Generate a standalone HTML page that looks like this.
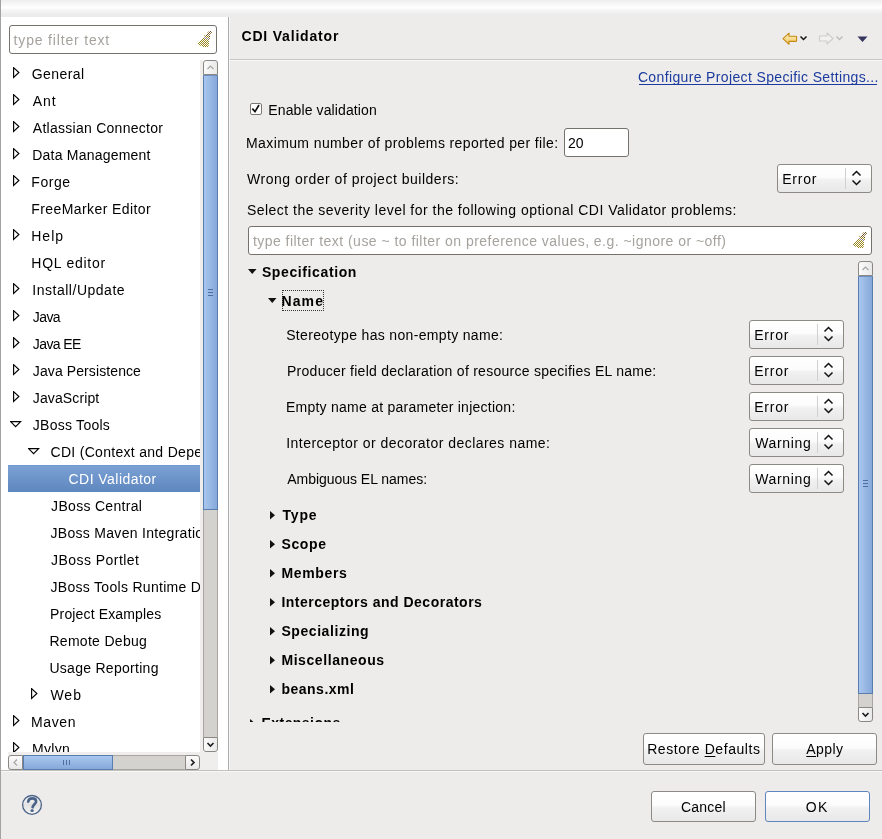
<!DOCTYPE html>
<html><head><meta charset="utf-8"><style>
html,body{margin:0;padding:0}
body{width:882px;height:839px;position:relative;overflow:hidden;background:#edeceb;font-family:"Liberation Sans", sans-serif;font-size:14px;color:#000}
.t{position:absolute;white-space:nowrap;line-height:16px;letter-spacing:0.3px}
u{text-decoration:underline;text-underline-offset:2px}
</style></head><body>
<div id="root" style="position:absolute;left:0;top:0;width:882px;height:839px;will-change:transform">
<div style="position:absolute;left:0px;top:0px;width:882px;height:17px;background:linear-gradient(#eeeeee 0px,#f7f7f7 4px,#ffffff 7.5px,#f6f6f6 10px,#ededed 14px,#ebebea 17px)"></div>
<div style="position:absolute;left:0px;top:0px;width:1px;height:839px;background:#a2a2a2"></div>
<div style="position:absolute;left:1px;top:17px;width:227px;height:753px;background:#ffffff"></div>
<div style="position:absolute;left:228px;top:17px;width:1px;height:753px;background:#acacac"></div>
<div style="position:absolute;left:229px;top:17px;width:1px;height:753px;background:#f7f7f7"></div>
<div style="position:absolute;left:1px;top:770px;width:881px;height:1px;background:#c2c0bd"></div>
<div style="position:absolute;left:1px;top:771px;width:881px;height:1px;background:#f8f8f7"></div>
<div style="position:absolute;left:9px;top:25px;width:208px;height:29px;box-sizing:border-box;border:1px solid #75716d;border-radius:3px;background:#fff"></div>
<div class="t" style="left:13.6px;top:32.15px;letter-spacing:0.827px;color:#a6a29e">type filter text</div>
<svg style="position:absolute;left:194px;top:28px" width="20" height="20" viewBox="0 0 20 20" shape-rendering="crispEdges"><rect x="14" y="3" width="1" height="1" fill="#c8b49a"/><rect x="16" y="3" width="1" height="1" fill="#6f4d1f"/><rect x="13" y="4" width="1" height="1" fill="#c8b49a"/><rect x="15" y="4" width="1" height="1" fill="#6f4d1f"/><rect x="17" y="4" width="1" height="1" fill="#9a7a52"/><rect x="14" y="5" width="1" height="1" fill="#6f4d1f"/><rect x="16" y="5" width="1" height="1" fill="#9a7a52"/><rect x="13" y="6" width="1" height="1" fill="#6f4d1f"/><rect x="15" y="6" width="1" height="1" fill="#9a7a52"/><rect x="10" y="7" width="1" height="1" fill="#bdb060"/><rect x="12" y="7" width="1" height="1" fill="#6f4d1f"/><rect x="14" y="7" width="1" height="1" fill="#9a7a52"/><rect x="11" y="8" width="1" height="1" fill="#9d8b22"/><rect x="13" y="8" width="1" height="1" fill="#9d8b22"/><rect x="15" y="8" width="1" height="1" fill="#6f4d1f"/><rect x="10" y="9" width="1" height="1" fill="#8c7ea6"/><rect x="12" y="9" width="1" height="1" fill="#9d8b22"/><rect x="14" y="9" width="1" height="1" fill="#9d8b22"/><rect x="9" y="10" width="1" height="1" fill="#9d8b22"/><rect x="11" y="10" width="1" height="1" fill="#8c7ea6"/><rect x="13" y="10" width="1" height="1" fill="#8c7ea6"/><rect x="15" y="10" width="1" height="1" fill="#9d8b22"/><rect x="8" y="11" width="1" height="1" fill="#9d8b22"/><rect x="10" y="11" width="1" height="1" fill="#9d8b22"/><rect x="12" y="11" width="1" height="1" fill="#9d8b22"/><rect x="14" y="11" width="1" height="1" fill="#8c7ea6"/><rect x="7" y="12" width="1" height="1" fill="#9d8b22"/><rect x="9" y="12" width="1" height="1" fill="#9d8b22"/><rect x="11" y="12" width="1" height="1" fill="#9d8b22"/><rect x="13" y="12" width="1" height="1" fill="#9d8b22"/><rect x="6" y="13" width="1" height="1" fill="#9d8b22"/><rect x="8" y="13" width="1" height="1" fill="#9d8b22"/><rect x="10" y="13" width="1" height="1" fill="#9d8b22"/><rect x="12" y="13" width="1" height="1" fill="#9d8b22"/><rect x="14" y="13" width="1" height="1" fill="#9d8b22"/><rect x="5" y="14" width="1" height="1" fill="#9d8b22"/><rect x="7" y="14" width="1" height="1" fill="#9d8b22"/><rect x="9" y="14" width="1" height="1" fill="#9d8b22"/><rect x="11" y="14" width="1" height="1" fill="#9d8b22"/><rect x="13" y="14" width="1" height="1" fill="#9d8b22"/><rect x="4" y="15" width="1" height="1" fill="#9d8b22"/><rect x="6" y="15" width="1" height="1" fill="#9d8b22"/><rect x="8" y="15" width="1" height="1" fill="#9d8b22"/><rect x="10" y="15" width="1" height="1" fill="#9d8b22"/><rect x="12" y="15" width="1" height="1" fill="#9d8b22"/><rect x="14" y="15" width="1" height="1" fill="#9d8b22"/><rect x="5" y="16" width="1" height="1" fill="#9d8b22"/><rect x="7" y="16" width="1" height="1" fill="#9d8b22"/><rect x="9" y="16" width="1" height="1" fill="#9d8b22"/><rect x="11" y="16" width="1" height="1" fill="#9d8b22"/><rect x="13" y="16" width="1" height="1" fill="#9d8b22"/><rect x="6" y="17" width="1" height="1" fill="#bdb060"/><rect x="8" y="17" width="1" height="1" fill="#9d8b22"/><rect x="10" y="17" width="1" height="1" fill="#9d8b22"/><rect x="12" y="17" width="1" height="1" fill="#9d8b22"/><rect x="14" y="17" width="1" height="1" fill="#bdb060"/><rect x="9" y="18" width="1" height="1" fill="#9d8b22"/><rect x="11" y="18" width="1" height="1" fill="#9d8b22"/><rect x="13" y="18" width="1" height="1" fill="#9d8b22"/></svg>
<div style="position:absolute;left:8px;top:60px;width:192px;height:692px;overflow:hidden">
<div class="t" style="left:23.8px;top:5.85px;color:#000000;letter-spacing:0.433px">General</div>
<svg style="position:absolute;left:5px;top:7px" width="8" height="12" viewBox="0 0 8 12"><path d="M0.6,0.6 L5.9,5.5 L0.6,10.4 Z" fill="none" stroke="#000" stroke-width="1.15" stroke-linejoin="miter"/></svg>
<div class="t" style="left:24.799999999999997px;top:32.85px;color:#000000;letter-spacing:0.9px">Ant</div>
<svg style="position:absolute;left:5px;top:34px" width="8" height="12" viewBox="0 0 8 12"><path d="M0.6,0.6 L5.9,5.5 L0.6,10.4 Z" fill="none" stroke="#000" stroke-width="1.15" stroke-linejoin="miter"/></svg>
<div class="t" style="left:24.799999999999997px;top:59.85px;color:#000000;letter-spacing:0.267px">Atlassian Connector</div>
<svg style="position:absolute;left:5px;top:61px" width="8" height="12" viewBox="0 0 8 12"><path d="M0.6,0.6 L5.9,5.5 L0.6,10.4 Z" fill="none" stroke="#000" stroke-width="1.15" stroke-linejoin="miter"/></svg>
<div class="t" style="left:24.299999999999997px;top:86.85px;color:#000000;letter-spacing:0.214px">Data Management</div>
<svg style="position:absolute;left:5px;top:88px" width="8" height="12" viewBox="0 0 8 12"><path d="M0.6,0.6 L5.9,5.5 L0.6,10.4 Z" fill="none" stroke="#000" stroke-width="1.15" stroke-linejoin="miter"/></svg>
<div class="t" style="left:23.3px;top:113.85px;color:#000000;letter-spacing:0.55px">Forge</div>
<svg style="position:absolute;left:5px;top:115px" width="8" height="12" viewBox="0 0 8 12"><path d="M0.6,0.6 L5.9,5.5 L0.6,10.4 Z" fill="none" stroke="#000" stroke-width="1.15" stroke-linejoin="miter"/></svg>
<div class="t" style="left:23.3px;top:140.85px;color:#000000;letter-spacing:0.406px">FreeMarker Editor</div>
<div class="t" style="left:23.3px;top:167.85px;color:#000000;letter-spacing:0.967px">Help</div>
<svg style="position:absolute;left:5px;top:169px" width="8" height="12" viewBox="0 0 8 12"><path d="M0.6,0.6 L5.9,5.5 L0.6,10.4 Z" fill="none" stroke="#000" stroke-width="1.15" stroke-linejoin="miter"/></svg>
<div class="t" style="left:23.3px;top:194.85px;color:#000000;letter-spacing:0.733px">HQL editor</div>
<div class="t" style="left:24.299999999999997px;top:221.85px;color:#000000;letter-spacing:0.515px">Install/Update</div>
<svg style="position:absolute;left:5px;top:223px" width="8" height="12" viewBox="0 0 8 12"><path d="M0.6,0.6 L5.9,5.5 L0.6,10.4 Z" fill="none" stroke="#000" stroke-width="1.15" stroke-linejoin="miter"/></svg>
<div class="t" style="left:24.799999999999997px;top:248.85px;color:#000000;letter-spacing:-0.6px">Java</div>
<svg style="position:absolute;left:5px;top:250px" width="8" height="12" viewBox="0 0 8 12"><path d="M0.6,0.6 L5.9,5.5 L0.6,10.4 Z" fill="none" stroke="#000" stroke-width="1.15" stroke-linejoin="miter"/></svg>
<div class="t" style="left:24.799999999999997px;top:275.85px;color:#000000;letter-spacing:-0.6px">Java EE</div>
<svg style="position:absolute;left:5px;top:277px" width="8" height="12" viewBox="0 0 8 12"><path d="M0.6,0.6 L5.9,5.5 L0.6,10.4 Z" fill="none" stroke="#000" stroke-width="1.15" stroke-linejoin="miter"/></svg>
<div class="t" style="left:24.799999999999997px;top:302.85px;color:#000000;letter-spacing:0.1px">Java Persistence</div>
<svg style="position:absolute;left:5px;top:304px" width="8" height="12" viewBox="0 0 8 12"><path d="M0.6,0.6 L5.9,5.5 L0.6,10.4 Z" fill="none" stroke="#000" stroke-width="1.15" stroke-linejoin="miter"/></svg>
<div class="t" style="left:24.799999999999997px;top:329.85px;color:#000000;letter-spacing:0.122px">JavaScript</div>
<svg style="position:absolute;left:5px;top:331px" width="8" height="12" viewBox="0 0 8 12"><path d="M0.6,0.6 L5.9,5.5 L0.6,10.4 Z" fill="none" stroke="#000" stroke-width="1.15" stroke-linejoin="miter"/></svg>
<div class="t" style="left:24.799999999999997px;top:356.85px;color:#000000;letter-spacing:0.26px">JBoss Tools</div>
<svg style="position:absolute;left:2px;top:361px" width="12" height="8" viewBox="0 0 12 8"><path d="M0.6,0.6 L10.6,0.6 L5.6,5.6 Z" fill="none" stroke="#000" stroke-width="1.15" stroke-linejoin="miter"/></svg>
<div class="t" style="left:42.5px;top:383.85px;color:#000000;letter-spacing:0.3px">CDI (Context and Dependency Injection)</div>
<svg style="position:absolute;left:20px;top:388px" width="12" height="8" viewBox="0 0 12 8"><path d="M0.6,0.6 L10.6,0.6 L5.6,5.6 Z" fill="none" stroke="#000" stroke-width="1.15" stroke-linejoin="miter"/></svg>
<div style="position:absolute;left:0;top:405px;width:192px;height:27px;background:linear-gradient(#7ca2d5,#5e87bf)"></div>
<div style="position:absolute;left:0;top:405px;width:192px;height:1px;background:#7299cf"></div>
<div class="t" style="left:60.5px;top:410.85px;color:#ffffff;letter-spacing:0.458px">CDI Validator</div>
<div class="t" style="left:43.1px;top:437.85px;color:#000000;letter-spacing:0.308px">JBoss Central</div>
<div class="t" style="left:42.5px;top:464.85px;color:#000000;letter-spacing:0.3px">JBoss Maven Integration</div>
<div class="t" style="left:43.1px;top:491.85px;color:#000000;letter-spacing:0.45px">JBoss Portlet</div>
<div class="t" style="left:42.5px;top:518.85px;color:#000000;letter-spacing:0.3px">JBoss Tools Runtime Detection</div>
<div class="t" style="left:42.1px;top:545.85px;color:#000000;letter-spacing:0.147px">Project Examples</div>
<div class="t" style="left:41.4px;top:572.85px;color:#000000;letter-spacing:0.3px">Remote Debug</div>
<div class="t" style="left:41.4px;top:599.85px;color:#000000;letter-spacing:0.286px">Usage Reporting</div>
<div class="t" style="left:42.4px;top:626.85px;color:#000000;letter-spacing:1.0px">Web</div>
<svg style="position:absolute;left:23px;top:628px" width="8" height="12" viewBox="0 0 8 12"><path d="M0.6,0.6 L5.9,5.5 L0.6,10.4 Z" fill="none" stroke="#000" stroke-width="1.15" stroke-linejoin="miter"/></svg>
<div class="t" style="left:23.1px;top:653.85px;color:#000000;letter-spacing:0.575px">Maven</div>
<svg style="position:absolute;left:5px;top:655px" width="8" height="12" viewBox="0 0 8 12"><path d="M0.6,0.6 L5.9,5.5 L0.6,10.4 Z" fill="none" stroke="#000" stroke-width="1.15" stroke-linejoin="miter"/></svg>
<div class="t" style="left:24px;top:680.85px;color:#000000;letter-spacing:0.3px">Mylyn</div>
<svg style="position:absolute;left:5px;top:682px" width="8" height="12" viewBox="0 0 8 12"><path d="M0.6,0.6 L5.9,5.5 L0.6,10.4 Z" fill="none" stroke="#000" stroke-width="1.15" stroke-linejoin="miter"/></svg>
</div>
<div style="position:absolute;left:200px;top:60px;width:3px;height:692px;background:#efeeed"></div>
<div style="position:absolute;left:203px;top:60px;width:15px;height:15px;box-sizing:border-box;border:1px solid #8b8884;border-radius:3px 3px 0 0;background:linear-gradient(90deg,#fbfbfb,#e9e9e9)"></div>
<svg style="position:absolute;left:203px;top:60px" width="15" height="15" viewBox="0 0 15 15"><path d="M4.5,9 L7.5,6 L10.5,9" fill="none" stroke="#a9a6a2" stroke-width="1.2"/></svg>
<div style="position:absolute;left:203px;top:75px;width:15px;height:662px;box-sizing:border-box;border-left:1px solid #a9a6a2;border-right:1px solid #a9a6a2;background:#d4d2cf"></div>
<div style="position:absolute;left:203px;top:75px;width:15px;height:435px;box-sizing:border-box;border:1px solid #5a7db0;border-top-color:#7090c0;background:linear-gradient(90deg,#a8c6ee,#98b8e4 50%,#85a8da)"></div>
<div style="position:absolute;left:208px;top:289px;width:5px;height:1px;background:#4d6fa3"></div>
<div style="position:absolute;left:208px;top:292px;width:5px;height:1px;background:#4d6fa3"></div>
<div style="position:absolute;left:208px;top:295px;width:5px;height:1px;background:#4d6fa3"></div>
<div style="position:absolute;left:203px;top:737px;width:15px;height:15px;box-sizing:border-box;border:1px solid #8b8884;border-radius:0 0 3px 3px;background:linear-gradient(90deg,#fbfbfb,#e9e9e9)"></div>
<svg style="position:absolute;left:203px;top:737px" width="15" height="15" viewBox="0 0 15 15"><path d="M4.5,6 L7.5,9 L10.5,6" fill="none" stroke="#1a1a1a" stroke-width="1.6"/></svg>
<div style="position:absolute;left:8px;top:752px;width:210px;height:18px;background:#efeeed"></div>
<div style="position:absolute;left:8px;top:755px;width:15px;height:15px;box-sizing:border-box;border:1px solid #8b8884;border-radius:3px 0 0 3px;background:linear-gradient(#fbfbfb,#e9e9e9)"></div>
<svg style="position:absolute;left:8px;top:755px" width="15" height="15" viewBox="0 0 15 15"><path d="M9,4.5 L6,7.5 L9,10.5" fill="none" stroke="#a9a6a2" stroke-width="1.2"/></svg>
<div style="position:absolute;left:23px;top:755px;width:162px;height:15px;box-sizing:border-box;border-top:1px solid #a9a6a2;border-bottom:1px solid #a9a6a2;background:#d4d2cf"></div>
<div style="position:absolute;left:23px;top:755px;width:90px;height:15px;box-sizing:border-box;border:1px solid #5a7db0;background:linear-gradient(#a8c6ee,#98b8e4 50%,#85a8da)"></div>
<div style="position:absolute;left:63px;top:760px;width:1px;height:5px;background:#4d6fa3"></div>
<div style="position:absolute;left:66px;top:760px;width:1px;height:5px;background:#4d6fa3"></div>
<div style="position:absolute;left:69px;top:760px;width:1px;height:5px;background:#4d6fa3"></div>
<div style="position:absolute;left:185px;top:755px;width:15px;height:15px;box-sizing:border-box;border:1px solid #8b8884;border-radius:0 3px 3px 0;background:linear-gradient(#fbfbfb,#e9e9e9)"></div>
<svg style="position:absolute;left:185px;top:755px" width="15" height="15" viewBox="0 0 15 15"><path d="M6,4.5 L9,7.5 L6,10.5" fill="none" stroke="#1a1a1a" stroke-width="1.6"/></svg>
<div class="t" style="left:241.5px;top:28.25px;letter-spacing:0.808px;font-weight:bold">CDI Validator</div>
<div style="position:absolute;left:230px;top:59px;width:652px;height:1px;background:#c9c7c4"></div>
<div style="position:absolute;left:230px;top:60px;width:652px;height:1px;background:#f7f7f6"></div>
<svg style="position:absolute;left:782px;top:32px" width="16" height="14" viewBox="0 0 16 14">
<defs><linearGradient id="ag" x1="0" y1="0" x2="0" y2="1"><stop offset="0" stop-color="#fff4c8"/><stop offset="1" stop-color="#f0c458"/></linearGradient></defs>
<path d="M1,6.7 L7,1.2 L7,4.2 L14,4.2 Q14.6,4.2 14.6,4.8 L14.6,8.8 Q14.6,9.4 14,9.4 L7,9.4 L7,12.3 Z" fill="url(#ag)" stroke="#c48a12" stroke-width="1.1" stroke-linejoin="round"/></svg>
<svg style="position:absolute;left:799px;top:35px" width="10" height="7" viewBox="0 0 10 7"><path d="M1.5,1.5 L4.5,4.5 L7.5,1.5" fill="none" stroke="#111" stroke-width="1.45"/></svg>
<svg style="position:absolute;left:818px;top:32px" width="16" height="14" viewBox="0 0 16 14">
<path d="M15,6.5 L9,1 L9,4 L1.5,4 L1.5,9 L9,9 L9,12 Z" fill="#f1f1f0" stroke="#cfcecc" stroke-width="1.1" stroke-linejoin="round"/></svg>
<svg style="position:absolute;left:835px;top:35px" width="10" height="7" viewBox="0 0 10 7"><path d="M1.5,1.5 L4.5,4.5 L7.5,1.5" fill="none" stroke="#bdbcba" stroke-width="1.4"/></svg>
<svg style="position:absolute;left:857px;top:36px" width="12" height="7" viewBox="0 0 12 7"><path d="M0.5,0.5 L10.5,0.5 L5.5,6 Z" fill="#35355e"/></svg>
<div class="t" style="left:637.9px;top:68.95px;letter-spacing:0.362px;color:#1b3b9e">Configure Project Specific Settings...</div>
<div style="position:absolute;left:639px;top:84px;width:238px;height:1px;background:#1b3b9e"></div>
<div style="position:absolute;left:250px;top:103px;width:12px;height:12px;box-sizing:border-box;border:1px solid #7a7773;border-radius:2px;background:#fff"></div>
<svg style="position:absolute;left:250px;top:103px" width="12" height="12" viewBox="0 0 12 12"><path d="M2.3,5.6 L5,8.6 L9,2" fill="none" stroke="#111" stroke-width="1.7"/></svg>
<div class="t" style="left:268.3px;top:102.35px;letter-spacing:0.113px;">Enable validation</div>
<div class="t" style="left:246px;top:134.85px;letter-spacing:0.393px;">Maximum number of problems reported per file:</div>
<div style="position:absolute;left:564px;top:128px;width:65px;height:29px;box-sizing:border-box;border:1px solid #75716d;border-radius:3px;background:#fff"></div>
<div class="t" style="left:567.9px;top:134.95px;letter-spacing:0.1px;">20</div>
<div class="t" style="left:247px;top:171.15px;letter-spacing:0.513px;">Wrong order of project builders:</div>
<div style="position:absolute;left:777px;top:164px;width:95px;height:29px;box-sizing:border-box;border:1px solid #8d8a86;border-radius:3px;background:linear-gradient(#ffffff,#fcfcfc 45%,#f1f1f1 55%,#e8e8e8)"></div>
<div style="position:absolute;left:845px;top:168px;width:1px;height:21px;background:#d2d0cd"></div>
<svg style="position:absolute;left:851px;top:170px" width="12" height="16" viewBox="0 0 12 16"><path d="M1.5,5.5 L5.5,1.5 L9.5,5.5 M1.5,10.5 L5.5,14.5 L9.5,10.5" fill="none" stroke="#111" stroke-width="1.5"/></svg>
<div class="t" style="left:782.3px;top:171.15px;letter-spacing:0.725px;">Error</div>
<div class="t" style="left:246.9px;top:202.15px;letter-spacing:0.481px;">Select the severity level for the following optional CDI Validator problems:</div>
<div style="position:absolute;left:248px;top:226px;width:624px;height:29px;box-sizing:border-box;border:1px solid #75716d;border-radius:3px;background:#fff"></div>
<div class="t" style="left:252.9px;top:233.15px;letter-spacing:0.468px;color:#a6a29e">type filter text (use ~ to filter on preference values, e.g. ~ignore or ~off)</div>
<svg style="position:absolute;left:849px;top:229px" width="20" height="20" viewBox="0 0 20 20" shape-rendering="crispEdges"><rect x="14" y="3" width="1" height="1" fill="#c8b49a"/><rect x="16" y="3" width="1" height="1" fill="#6f4d1f"/><rect x="13" y="4" width="1" height="1" fill="#c8b49a"/><rect x="15" y="4" width="1" height="1" fill="#6f4d1f"/><rect x="17" y="4" width="1" height="1" fill="#9a7a52"/><rect x="14" y="5" width="1" height="1" fill="#6f4d1f"/><rect x="16" y="5" width="1" height="1" fill="#9a7a52"/><rect x="13" y="6" width="1" height="1" fill="#6f4d1f"/><rect x="15" y="6" width="1" height="1" fill="#9a7a52"/><rect x="10" y="7" width="1" height="1" fill="#bdb060"/><rect x="12" y="7" width="1" height="1" fill="#6f4d1f"/><rect x="14" y="7" width="1" height="1" fill="#9a7a52"/><rect x="11" y="8" width="1" height="1" fill="#9d8b22"/><rect x="13" y="8" width="1" height="1" fill="#9d8b22"/><rect x="15" y="8" width="1" height="1" fill="#6f4d1f"/><rect x="10" y="9" width="1" height="1" fill="#8c7ea6"/><rect x="12" y="9" width="1" height="1" fill="#9d8b22"/><rect x="14" y="9" width="1" height="1" fill="#9d8b22"/><rect x="9" y="10" width="1" height="1" fill="#9d8b22"/><rect x="11" y="10" width="1" height="1" fill="#8c7ea6"/><rect x="13" y="10" width="1" height="1" fill="#8c7ea6"/><rect x="15" y="10" width="1" height="1" fill="#9d8b22"/><rect x="8" y="11" width="1" height="1" fill="#9d8b22"/><rect x="10" y="11" width="1" height="1" fill="#9d8b22"/><rect x="12" y="11" width="1" height="1" fill="#9d8b22"/><rect x="14" y="11" width="1" height="1" fill="#8c7ea6"/><rect x="7" y="12" width="1" height="1" fill="#9d8b22"/><rect x="9" y="12" width="1" height="1" fill="#9d8b22"/><rect x="11" y="12" width="1" height="1" fill="#9d8b22"/><rect x="13" y="12" width="1" height="1" fill="#9d8b22"/><rect x="6" y="13" width="1" height="1" fill="#9d8b22"/><rect x="8" y="13" width="1" height="1" fill="#9d8b22"/><rect x="10" y="13" width="1" height="1" fill="#9d8b22"/><rect x="12" y="13" width="1" height="1" fill="#9d8b22"/><rect x="14" y="13" width="1" height="1" fill="#9d8b22"/><rect x="5" y="14" width="1" height="1" fill="#9d8b22"/><rect x="7" y="14" width="1" height="1" fill="#9d8b22"/><rect x="9" y="14" width="1" height="1" fill="#9d8b22"/><rect x="11" y="14" width="1" height="1" fill="#9d8b22"/><rect x="13" y="14" width="1" height="1" fill="#9d8b22"/><rect x="4" y="15" width="1" height="1" fill="#9d8b22"/><rect x="6" y="15" width="1" height="1" fill="#9d8b22"/><rect x="8" y="15" width="1" height="1" fill="#9d8b22"/><rect x="10" y="15" width="1" height="1" fill="#9d8b22"/><rect x="12" y="15" width="1" height="1" fill="#9d8b22"/><rect x="14" y="15" width="1" height="1" fill="#9d8b22"/><rect x="5" y="16" width="1" height="1" fill="#9d8b22"/><rect x="7" y="16" width="1" height="1" fill="#9d8b22"/><rect x="9" y="16" width="1" height="1" fill="#9d8b22"/><rect x="11" y="16" width="1" height="1" fill="#9d8b22"/><rect x="13" y="16" width="1" height="1" fill="#9d8b22"/><rect x="6" y="17" width="1" height="1" fill="#bdb060"/><rect x="8" y="17" width="1" height="1" fill="#9d8b22"/><rect x="10" y="17" width="1" height="1" fill="#9d8b22"/><rect x="12" y="17" width="1" height="1" fill="#9d8b22"/><rect x="14" y="17" width="1" height="1" fill="#bdb060"/><rect x="9" y="18" width="1" height="1" fill="#9d8b22"/><rect x="11" y="18" width="1" height="1" fill="#9d8b22"/><rect x="13" y="18" width="1" height="1" fill="#9d8b22"/></svg>
<div style="position:absolute;left:240px;top:262px;width:617px;height:460px;overflow:hidden">
<svg style="position:absolute;left:8px;top:7px" width="9" height="6" viewBox="0 0 9 6"><path d="M0,0 L8.5,0 L4.25,5 Z" fill="#111"/></svg>
<div class="t" style="left:21.899999999999977px;top:2.35px;letter-spacing:0.617px;font-weight:bold">Specification</div>
<svg style="position:absolute;left:28px;top:36px" width="9" height="6" viewBox="0 0 9 6"><path d="M0,0 L8.5,0 L4.25,5 Z" fill="#111"/></svg>
<div style="position:absolute;left:42px;top:28px;width:42px;height:21px;box-sizing:border-box;border:1px dotted #333"></div>
<div class="t" style="left:41.39999999999998px;top:31.15px;letter-spacing:1.133px;font-weight:bold">Name</div>
<div class="t" style="left:46.19999999999999px;top:65.25px;letter-spacing:0.338px;">Stereotype has non-empty name:</div>
<div class="t" style="left:47px;top:101.25px;letter-spacing:0.266px;">Producer field declaration of resource specifies EL name:</div>
<div class="t" style="left:45.89999999999998px;top:137.25px;letter-spacing:0.255px;">Empty name at parameter injection:</div>
<div class="t" style="left:46.19999999999999px;top:173.25px;letter-spacing:0.471px;">Interceptor or decorator declares name:</div>
<div class="t" style="left:47.19999999999999px;top:209.25px;letter-spacing:-0.028px;">Ambiguous EL names:</div>
</div>
<div style="position:absolute;left:749px;top:320px;width:95px;height:29px;box-sizing:border-box;border:1px solid #8d8a86;border-radius:3px;background:linear-gradient(#ffffff,#fcfcfc 45%,#f1f1f1 55%,#e8e8e8)"></div>
<div style="position:absolute;left:817px;top:324px;width:1px;height:21px;background:#d2d0cd"></div>
<svg style="position:absolute;left:823px;top:326px" width="12" height="16" viewBox="0 0 12 16"><path d="M1.5,5.5 L5.5,1.5 L9.5,5.5 M1.5,10.5 L5.5,14.5 L9.5,10.5" fill="none" stroke="#111" stroke-width="1.5"/></svg>
<div class="t" style="left:754.3px;top:327.15px;letter-spacing:0.725px;">Error</div>
<div style="position:absolute;left:749px;top:356px;width:95px;height:29px;box-sizing:border-box;border:1px solid #8d8a86;border-radius:3px;background:linear-gradient(#ffffff,#fcfcfc 45%,#f1f1f1 55%,#e8e8e8)"></div>
<div style="position:absolute;left:817px;top:360px;width:1px;height:21px;background:#d2d0cd"></div>
<svg style="position:absolute;left:823px;top:362px" width="12" height="16" viewBox="0 0 12 16"><path d="M1.5,5.5 L5.5,1.5 L9.5,5.5 M1.5,10.5 L5.5,14.5 L9.5,10.5" fill="none" stroke="#111" stroke-width="1.5"/></svg>
<div class="t" style="left:754.3px;top:363.15px;letter-spacing:0.725px;">Error</div>
<div style="position:absolute;left:749px;top:392px;width:95px;height:29px;box-sizing:border-box;border:1px solid #8d8a86;border-radius:3px;background:linear-gradient(#ffffff,#fcfcfc 45%,#f1f1f1 55%,#e8e8e8)"></div>
<div style="position:absolute;left:817px;top:396px;width:1px;height:21px;background:#d2d0cd"></div>
<svg style="position:absolute;left:823px;top:398px" width="12" height="16" viewBox="0 0 12 16"><path d="M1.5,5.5 L5.5,1.5 L9.5,5.5 M1.5,10.5 L5.5,14.5 L9.5,10.5" fill="none" stroke="#111" stroke-width="1.5"/></svg>
<div class="t" style="left:754.3px;top:399.15px;letter-spacing:0.725px;">Error</div>
<div style="position:absolute;left:749px;top:428px;width:95px;height:29px;box-sizing:border-box;border:1px solid #8d8a86;border-radius:3px;background:linear-gradient(#ffffff,#fcfcfc 45%,#f1f1f1 55%,#e8e8e8)"></div>
<div style="position:absolute;left:817px;top:432px;width:1px;height:21px;background:#d2d0cd"></div>
<svg style="position:absolute;left:823px;top:434px" width="12" height="16" viewBox="0 0 12 16"><path d="M1.5,5.5 L5.5,1.5 L9.5,5.5 M1.5,10.5 L5.5,14.5 L9.5,10.5" fill="none" stroke="#111" stroke-width="1.5"/></svg>
<div class="t" style="left:755.3px;top:435.15px;letter-spacing:0.633px;">Warning</div>
<div style="position:absolute;left:749px;top:464px;width:95px;height:29px;box-sizing:border-box;border:1px solid #8d8a86;border-radius:3px;background:linear-gradient(#ffffff,#fcfcfc 45%,#f1f1f1 55%,#e8e8e8)"></div>
<div style="position:absolute;left:817px;top:468px;width:1px;height:21px;background:#d2d0cd"></div>
<svg style="position:absolute;left:823px;top:470px" width="12" height="16" viewBox="0 0 12 16"><path d="M1.5,5.5 L5.5,1.5 L9.5,5.5 M1.5,10.5 L5.5,14.5 L9.5,10.5" fill="none" stroke="#111" stroke-width="1.5"/></svg>
<div class="t" style="left:755.3px;top:471.15px;letter-spacing:0.633px;">Warning</div>
<div style="position:absolute;left:240px;top:262px;width:617px;height:460px;overflow:hidden">
<svg style="position:absolute;left:30px;top:249px" width="6" height="9" viewBox="0 0 6 9"><path d="M0,0 L5,4.25 L0,8.5 Z" fill="#111"/></svg>
<div class="t" style="left:42.39999999999998px;top:245.15px;letter-spacing:0.867px;font-weight:bold">Type</div>
<svg style="position:absolute;left:30px;top:278px" width="6" height="9" viewBox="0 0 6 9"><path d="M0,0 L5,4.25 L0,8.5 Z" fill="#111"/></svg>
<div class="t" style="left:41.39999999999998px;top:274.15px;letter-spacing:0.675px;font-weight:bold">Scope</div>
<svg style="position:absolute;left:30px;top:307px" width="6" height="9" viewBox="0 0 6 9"><path d="M0,0 L5,4.25 L0,8.5 Z" fill="#111"/></svg>
<div class="t" style="left:41.39999999999998px;top:303.15px;letter-spacing:0.667px;font-weight:bold">Members</div>
<svg style="position:absolute;left:30px;top:336px" width="6" height="9" viewBox="0 0 6 9"><path d="M0,0 L5,4.25 L0,8.5 Z" fill="#111"/></svg>
<div class="t" style="left:41.39999999999998px;top:332.15px;letter-spacing:0.5px;font-weight:bold">Interceptors and Decorators</div>
<svg style="position:absolute;left:30px;top:365px" width="6" height="9" viewBox="0 0 6 9"><path d="M0,0 L5,4.25 L0,8.5 Z" fill="#111"/></svg>
<div class="t" style="left:41.39999999999998px;top:361.15px;letter-spacing:0.573px;font-weight:bold">Specializing</div>
<svg style="position:absolute;left:30px;top:394px" width="6" height="9" viewBox="0 0 6 9"><path d="M0,0 L5,4.25 L0,8.5 Z" fill="#111"/></svg>
<div class="t" style="left:41.39999999999998px;top:390.15px;letter-spacing:0.583px;font-weight:bold">Miscellaneous</div>
<svg style="position:absolute;left:30px;top:423px" width="6" height="9" viewBox="0 0 6 9"><path d="M0,0 L5,4.25 L0,8.5 Z" fill="#111"/></svg>
<div class="t" style="left:41.39999999999998px;top:419.15px;letter-spacing:0.513px;font-weight:bold">beans.xml</div>
<svg style="position:absolute;left:10px;top:457px" width="6" height="9" viewBox="0 0 6 9"><path d="M0,0 L5,4.25 L0,8.5 Z" fill="#111"/></svg>
<div class="t" style="left:21.5px;top:453.15px;letter-spacing:0.45px;font-weight:bold">Extensions</div>
</div>
<div style="position:absolute;left:858px;top:261px;width:15px;height:15px;box-sizing:border-box;border:1px solid #8b8884;border-radius:3px 3px 0 0;background:linear-gradient(90deg,#fbfbfb,#e9e9e9)"></div>
<svg style="position:absolute;left:858px;top:261px" width="15" height="15" viewBox="0 0 15 15"><path d="M4.5,9 L7.5,6 L10.5,9" fill="none" stroke="#a9a6a2" stroke-width="1.2"/></svg>
<div style="position:absolute;left:858px;top:276px;width:15px;height:431px;box-sizing:border-box;border-left:1px solid #a9a6a2;border-right:1px solid #a9a6a2;background:#d4d2cf"></div>
<div style="position:absolute;left:858px;top:276px;width:15px;height:418px;box-sizing:border-box;border:1px solid #5a7db0;border-top-color:#7090c0;background:linear-gradient(90deg,#a8c6ee,#98b8e4 50%,#85a8da)"></div>
<div style="position:absolute;left:863px;top:480px;width:5px;height:1px;background:#4d6fa3"></div>
<div style="position:absolute;left:863px;top:483px;width:5px;height:1px;background:#4d6fa3"></div>
<div style="position:absolute;left:863px;top:486px;width:5px;height:1px;background:#4d6fa3"></div>
<div style="position:absolute;left:858px;top:707px;width:15px;height:15px;box-sizing:border-box;border:1px solid #8b8884;border-radius:0 0 3px 3px;background:linear-gradient(90deg,#fbfbfb,#e9e9e9)"></div>
<svg style="position:absolute;left:858px;top:707px" width="15" height="15" viewBox="0 0 15 15"><path d="M4.5,6 L7.5,9 L10.5,6" fill="none" stroke="#1a1a1a" stroke-width="1.6"/></svg>
<div style="position:absolute;left:643px;top:733px;width:122px;height:32px;box-sizing:border-box;border:1px solid #8d8a86;border-radius:3px;background:linear-gradient(#ffffff,#fcfcfc 45%,#f1f1f1 55%,#e8e8e8)"></div>
<div class="t" style="left:647.2px;top:741.45px;letter-spacing:0.567px;">Restore <u>D</u>efaults</div>
<div style="position:absolute;left:772px;top:733px;width:105px;height:32px;box-sizing:border-box;border:1px solid #8d8a86;border-radius:3px;background:linear-gradient(#ffffff,#fcfcfc 45%,#f1f1f1 55%,#e8e8e8)"></div>
<div class="t" style="left:806.3px;top:741.45px;letter-spacing:0.4px;"><u>A</u>pply</div>
<div style="position:absolute;left:651px;top:791px;width:105px;height:31px;box-sizing:border-box;border:1px solid #8d8a86;border-radius:3px;background:linear-gradient(#ffffff,#fcfcfc 45%,#f1f1f1 55%,#e8e8e8)"></div>
<div class="t" style="left:680.9px;top:799.15px;letter-spacing:0.24px;">Cancel</div>
<div style="position:absolute;left:765px;top:791px;width:105px;height:31px;box-sizing:border-box;border:1px solid #5d86bf;border-radius:3px;background:linear-gradient(#ffffff,#fcfcfc 45%,#f1f1f1 55%,#e8e8e8)"></div>
<div class="t" style="left:805.8px;top:799.15px;letter-spacing:1.2px;">OK</div>
<svg style="position:absolute;left:21px;top:794px" width="23" height="23" viewBox="0 0 23 23">
<defs><linearGradient id="hg" x1="0" y1="0" x2="0" y2="1"><stop offset="0" stop-color="#fbfbfb"/><stop offset="0.5" stop-color="#e2e2e2"/><stop offset="1" stop-color="#f6f6f6"/></linearGradient></defs>
<circle cx="11" cy="10.9" r="9.4" fill="url(#hg)" stroke="#4c6389" stroke-width="1.3"/>
<path d="M7.2,7.6 C7.6,5.2 9.3,4.3 11.3,4.3 C13.6,4.3 15.1,5.6 15.1,7.4 C15.1,9.9 12.0,10.3 11.6,13.2" fill="none" stroke="#4c6389" stroke-width="2.7" stroke-linecap="round"/>
<ellipse cx="11.1" cy="16.7" rx="1.7" ry="1.4" fill="#4c6389"/>
</svg>
</div>
</body></html>
